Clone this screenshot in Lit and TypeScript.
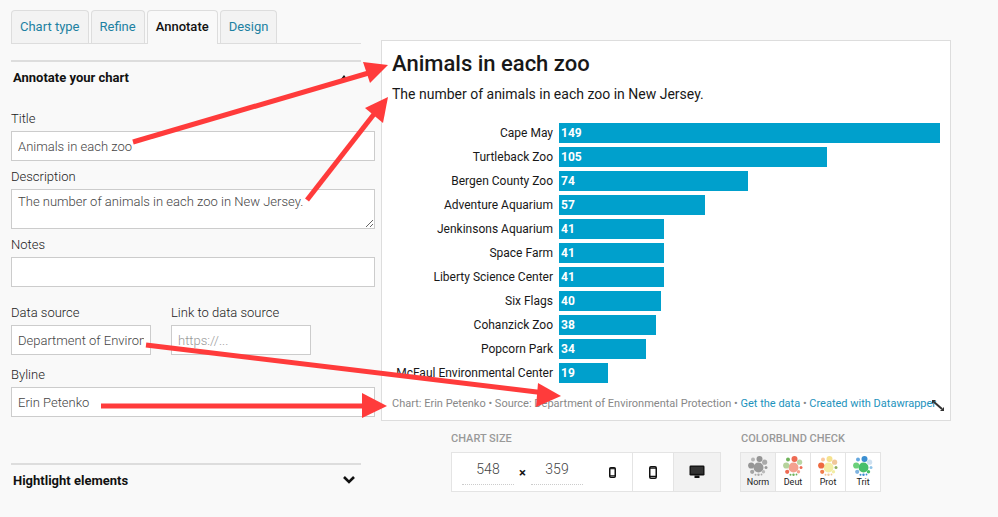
import { LitElement, css, html, svg } from 'lit';
import { customElement } from 'lit/decorators.js';

const ZOOS: [string, number][] = [
  ['Cape May', 149],
  ['Turtleback Zoo', 105],
  ['Bergen County Zoo', 74],
  ['Adventure Aquarium', 57],
  ['Jenkinsons Aquarium', 41],
  ['Space Farm', 41],
  ['Liberty Science Center', 41],
  ['Six Flags', 40],
  ['Cohanzick Zoo', 38],
  ['Popcorn Park', 34],
  ['McFaul Environmental Center', 19],
];

// each dot: x, y, r, palette index
const DOTS: [number, number, number, number][] = [
  [10.5, 11.5, 5, 0],
  [3.2, 9.5, 3.1, 1],
  [11.5, 3, 3, 2],
  [5, 3.4, 2, 3],
  [16.6, 6.2, 2.6, 4],
  [18, 11.5, 1.5, 5],
  [4.2, 15.8, 2.1, 6],
  [15.5, 15.8, 1.7, 7],
  [10.5, 18.8, 1.2, 8],
  [7.5, 18.8, 1, 8],
  [13.5, 18.5, 0.9, 8],
];

const PALETTES: [string, string[]][] = [
  ['Norm', ['#999', '#959595', '#959595', '#b5b5b5', '#aaa', '#999', '#a5a5a5', '#bbb', '#aaa']],
  ['Deut', ['#f4a18f', '#b5d39c', '#ee6b54', '#6fb35c', '#b9d6a4', '#ee6b54', '#ee6b54', '#f4a18f', '#6fb35c']],
  ['Prot', ['#f3eea5', '#ee6a40', '#f5e28e', '#f9c99f', '#f1c89b', '#8fae62', '#f17e4e', '#f3eea5', '#f1c89b']],
  ['Trit', ['#47bf6a', '#6bd07a', '#3b8fd2', '#66a8df', '#cfe1f1', '#8fc4e8', '#7fb3e0', '#47bf6a', '#3b8fd2']],
];

@customElement('app-root')
export class AppRoot extends LitElement {
  render() {
    return html`
      <div class="page">
        <div class="side">
          <div class="tabs">
            <a class="tab">Chart type</a>
            <a class="tab">Refine</a>
            <a class="tab active">Annotate</a>
            <a class="tab">Design</a>
          </div>
          <div class="section-head first">
            <b>Annotate your chart</b>
            <span class="caret-up"></span>
          </div>
          <label class="field title">Title<input value="Animals in each zoo" /></label>
          <label class="field">Description<textarea>The number of animals in each zoo in New Jersey.</textarea></label>
          <label class="field">Notes<input /></label>
          <div class="pair">
            <label class="field">Data source<input value="Department of Environmental Protection" /></label>
            <label class="field">Link to data source<input placeholder="https://..." /></label>
          </div>
          <label class="field byline">Byline<input value="Erin Petenko" /></label>
          <div class="section-head second">
            <b>Hightlight elements</b>
            <svg width="14" height="10" viewBox="0 0 14 10"><path d="M2 2l5 5 5-5" fill="none" stroke="#111" stroke-width="2.6"/></svg>
          </div>
        </div>
        <div class="main">
          <div class="chart">
            <h1>Animals in each zoo</h1>
            <p class="desc">The number of animals in each zoo in New Jersey.</p>
            <div class="rows">
              ${ZOOS.map(
                ([name, value]) => html`
                  <div class="row">
                    <span class="name">${name}</span>
                    <span class="bar" style="width:${(value / 149) * 381}px">${value}</span>
                  </div>
                `
              )}
            </div>
            <div class="foot">
              Chart: Erin Petenko • Source: Department of Environmental Protection •
              <a>Get the data</a> • <a>Created with Datawrapper</a>
            </div>
            <svg class="resize" width="12" height="11" viewBox="0 0 12 11">
              <path d="M2 2l8 7" fill="none" stroke="#333" stroke-width="2"/>
              <path d="M0 0h4L0 4zM12 11H8l4-4z" fill="#333"/>
            </svg>
          </div>
          <div class="tools">
            <div>
              <div class="tool-label">CHART SIZE</div>
              <div class="size-box">
                <div class="dims">
                  <span class="dim">548</span><span class="times">×</span><span class="dim">359</span>
                  <svg class="phone" width="7" height="11" viewBox="0 0 7 11"><rect x="0.75" y="0.75" width="5.5" height="9.5" rx="1" fill="none" stroke="#111" stroke-width="1.5"/><path d="M1 8.8h5M1 1.8h5" stroke="#111" stroke-width="1.1"/></svg>
                </div>
                <div class="size-btn">
                  <svg width="8" height="13" viewBox="0 0 8 13"><rect x="0.75" y="0.75" width="6.5" height="11.5" rx="1.2" fill="none" stroke="#111" stroke-width="1.5"/><path d="M1 10.3h6M1 2.2h6" stroke="#111" stroke-width="1.3"/></svg>
                </div>
                <div class="size-btn on">
                  <svg width="16" height="14" viewBox="0 0 16 14"><rect x="0.5" y="0.5" width="15" height="10" rx="1.2" fill="#111"/><rect x="1.8" y="1.8" width="12.4" height="7" fill="#333"/><path d="M5.5 10.5h5V13h-5z" fill="#111"/></svg>
                </div>
              </div>
            </div>
            <div>
              <div class="tool-label">COLORBLIND CHECK</div>
              <div class="blind-box">
                ${PALETTES.map(
                  ([name, colors], i) => html`
                    <div class="blind ${i === 0 ? 'on' : ''}">
                      <svg width="20" height="20" viewBox="0 0 20 20">
                        ${DOTS.map(([x, y, r, c]) => svg`<circle cx=${x} cy=${y} r=${r} fill=${colors[c]} />`)}
                      </svg>
                      <span>${name}</span>
                    </div>
                  `
                )}
              </div>
            </div>
          </div>
        </div>
        <svg class="arrows" width="998" height="517" viewBox="0 0 998 517">
          <g stroke="#ff3b3b" stroke-width="5" fill="#ff3b3b">
            <path d="M133 142L372 72" />
            <path d="M307 200L378 109" />
            <path d="M146 345L545 393" />
            <path d="M101 406L365 406" />
          </g>
          <g fill="#ff3b3b">
            <path d="M388 65L363 62L370 83Z" />
            <path d="M388 97L365 108L383 123Z" />
            <path d="M561 396L538 383L536 407Z" />
            <path d="M387 406L362 393V418Z" />
          </g>
        </svg>
      </div>
    `;
  }

  static styles = css`
    :host {
      display: block;
      font-family: Roboto, 'Liberation Sans', sans-serif;
    }

    .page {
      position: relative;
      display: flex;
      width: 998px;
      height: 517px;
      overflow: hidden;
      background: #f9f9f9;
      color: #333;
    }

    .side {
      width: 364px;
      margin-left: 11px;
      padding-top: 10px;
      flex: none;
    }

    .tabs {
      display: flex;
      gap: 2px;
      width: 350px;
      height: 34px;
      box-sizing: border-box;
      border-bottom: 1px solid #ddd;
    }

    .tab {
      height: 33px;
      box-sizing: border-box;
      padding: 8px 8px 0;
      border: 1px solid #ddd;
      border-bottom: none;
      border-radius: 4px 4px 0 0;
      background: #f3f3f3;
      font-size: 13px;
      line-height: 16px;
      color: #1d81a2;
    }

    .tab.active {
      height: 34px;
      background: #f9f9f9;
      color: #111;
      font-weight: 500;
    }

    .section-head {
      display: flex;
      align-items: center;
      justify-content: space-between;
      width: 350px;
      box-sizing: border-box;
      padding: 0 5px 0 2px;
      border-top: 2px solid #ddd;
      line-height: 16px;
      color: #111;
    }

    .section-head b {
      margin-top: 2px;
      font-weight: 700;
      font-size: 13px;
    }

    .section-head.first {
      height: 32px;
      margin-top: 16px;
    }

    .section-head.second {
      height: 32px;
      margin-top: 46px;
    }

    .caret-up {
      width: 0;
      height: 0;
      margin-right: 9px;
      border: 3px solid transparent;
      border-top: none;
      border-bottom: 4px solid #111;
    }

    .field {
      display: block;
      font-size: 13px;
      line-height: 18px;
      font-weight: 300;
      color: #222;
      margin-top: 7px;
    }

    .field.title {
      margin-top: 18px;
    }

    .field.byline {
      margin-top: 11px;
    }

    input,
    textarea {
      display: block;
      width: 100%;
      height: 30px;
      box-sizing: border-box;
      margin: 3px 0 0;
      padding: 0 6px;
      border: 1px solid #ccc;
      border-radius: 0;
      background: #fff;
      outline: none;
      font: 300 13px/16px Roboto, 'Liberation Sans', sans-serif;
      color: #444;
    }

    textarea {
      height: 40px;
      padding: 4px 6px;
    }

    input::placeholder {
      color: #999;
    }

    .pair {
      display: flex;
      gap: 20px;
      margin-top: 17px;
    }

    .pair .field {
      width: 140px;
      margin-top: 0;
    }

    .main {
      width: 570px;
      margin-left: 6px;
      padding-top: 40px;
      flex: none;
    }

    .chart {
      position: relative;
      height: 381px;
      box-sizing: border-box;
      padding: 10px 10px 0;
      border: 1px solid #ddd;
      background: #fff;
      color: #181818;
    }

    h1 {
      margin: 0;
      font-size: 22px;
      line-height: 26px;
      font-weight: 500;
    }

    .desc {
      margin: 7px 0 0;
      font-size: 14px;
      line-height: 20px;
    }

    .rows {
      display: flex;
      flex-direction: column;
      gap: 4px;
      margin-top: 19px;
    }

    .row {
      display: flex;
      align-items: center;
      height: 20px;
      gap: 6px;
      font-size: 12px;
    }

    .name {
      width: 161px;
      flex: none;
      text-align: right;
      white-space: nowrap;
    }

    .bar {
      height: 20px;
      box-sizing: border-box;
      padding-left: 2px;
      background: #00a0cc;
      color: #fff;
      font-weight: 700;
      line-height: 20px;
    }

    .foot {
      margin-top: 14px;
      font-size: 11px;
      line-height: 14px;
      color: #888;
      white-space: nowrap;
    }

    .foot a {
      color: #1d93bd;
    }

    .resize {
      position: absolute;
      right: 6px;
      bottom: 9px;
    }

    .tools {
      display: flex;
      gap: 20px;
      margin-top: 12px;
      padding-left: 70px;
    }

    .tool-label {
      font-size: 11px;
      line-height: 12px;
      font-weight: 500;
      color: #999;
    }

    .size-box,
    .blind-box {
      display: flex;
      height: 40px;
      box-sizing: border-box;
      margin-top: 7px;
      border: 1px solid #e4e4e4;
      background: #fff;
    }

    .size-box {
      width: 270px;
    }

    .dims {
      display: flex;
      align-items: center;
      width: 180px;
      box-sizing: border-box;
      padding-left: 10px;
      flex: none;
    }

    .dim {
      width: 52px;
      height: 28px;
      box-sizing: border-box;
      margin-top: -3px;
      border-bottom: 1px dotted #ccc;
      font-size: 14px;
      font-weight: 300;
      line-height: 24px;
      text-align: center;
      color: #444;
    }

    .times {
      width: 17px;
      text-align: center;
      font-size: 13px;
      font-weight: 700;
      color: #111;
    }

    .phone {
      margin-left: 26px;
    }

    .size-btn {
      display: flex;
      align-items: center;
      justify-content: center;
      width: 40px;
      border-left: 1px solid #e4e4e4;
      flex: none;
    }

    .size-btn.on {
      flex: 1;
      background: #f2f2f2;
    }

    .blind-box {
      width: 141px;
      margin-left: -1px;
    }

    .blind {
      display: flex;
      flex-direction: column;
      align-items: center;
      width: 35px;
      padding-top: 3px;
      border-left: 1px solid #e4e4e4;
      font-size: 9px;
      line-height: 11px;
      color: #222;
    }

    .blind:first-child {
      border-left: none;
    }

    .blind.on {
      background: #f2f2f2;
    }

    .blind svg {
      flex: none;
      margin-bottom: 1px;
    }

    .arrows {
      position: absolute;
      left: 0;
      top: 0;
      pointer-events: none;
    }
  `;
}
